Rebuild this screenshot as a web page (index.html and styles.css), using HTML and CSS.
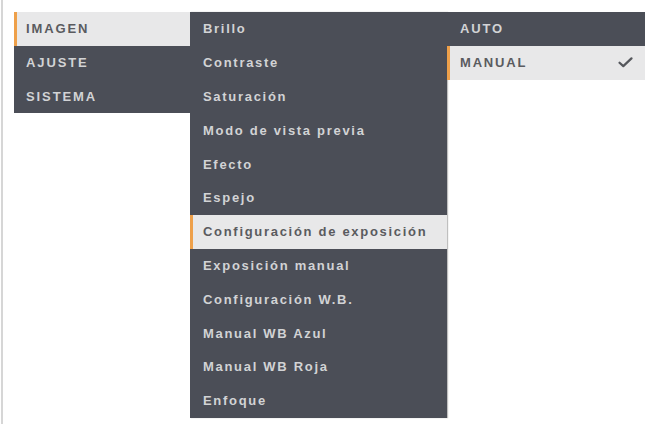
FILE: index.html
```html
<!DOCTYPE html>
<html lang="es">
<head>
<meta charset="utf-8">
<title>Menú</title>
<link rel="stylesheet" href="styles.css">
</head>
<body>
<div class="frame">
  <div class="menus">
    <ul class="menu menu-main">
      <li class="item active">IMAGEN</li>
      <li class="item">AJUSTE</li>
      <li class="item">SISTEMA</li>
    </ul>
    <ul class="menu menu-sub">
      <li class="item">Brillo</li>
      <li class="item">Contraste</li>
      <li class="item">Saturación</li>
      <li class="item">Modo de vista previa</li>
      <li class="item">Efecto</li>
      <li class="item">Espejo</li>
      <li class="item active">Configuración de exposición</li>
      <li class="item">Exposición manual</li>
      <li class="item">Configuración W.B.</li>
      <li class="item">Manual WB Azul</li>
      <li class="item">Manual WB Roja</li>
      <li class="item">Enfoque</li>
    </ul>
    <ul class="menu menu-opt">
      <li class="item">AUTO</li>
      <li class="item active"><span>MANUAL</span>
        <svg class="check" viewBox="0 0 16 12" width="15" height="11" aria-hidden="true"><path d="M1.5 6.2 L5.6 10 L14.5 1.5" fill="none" stroke="#55575c" stroke-width="2.4" stroke-linecap="round" stroke-linejoin="round"/></svg>
      </li>
    </ul>
  </div>
</div>
</body>
</html>
```

FILE: styles.css
```css
html, body {
  margin: 0;
  padding: 0;
  background: #ffffff;
}
body {
  font-family: "Liberation Sans", Arial, sans-serif;
  width: 648px;
  height: 424px;
  overflow: hidden;
}
.frame {
  margin-left: 1px;
  height: 424px;
  border-left: 2px solid #d6d6d6;
  box-sizing: border-box;
  padding: 12px 0 0 11px;
}
.menus {
  display: flex;
  align-items: flex-start;
}
.menu {
  list-style: none;
  margin: 0;
  padding: 0;
  background: #4b4e57;
}
.item {
  height: 33.8px;
  display: flex;
  align-items: center;
  box-sizing: border-box;
  color: #d2d3d5;
  font-weight: bold;
  font-size: 13px;
  white-space: nowrap;
}
.item.active {
  background: #e8e8e9;
  color: #5a5b5f;
  border-left: 3px solid #eea04a;
}
.menu-main {
  width: 176px;
}
.menu-main .item {
  padding-left: 12px;
  letter-spacing: 1.9px;
}
.menu-main .item.active {
  padding-left: 9px;
}
.menu-sub {
  width: 257px;
  box-shadow: 1px 0 1px rgba(0,0,0,0.25);
}
.menu-sub .item {
  padding-left: 13px;
  letter-spacing: 1.7px;
}
.menu-sub .item.active {
  padding-left: 10px;
}
.menu-opt {
  width: 198px;
}
.menu-opt .item {
  padding-left: 13px;
  padding-right: 12px;
  letter-spacing: 1.8px;
  justify-content: space-between;
}
.menu-opt .item.active {
  padding-left: 10px;
}
.check {
  display: block;
}
```
